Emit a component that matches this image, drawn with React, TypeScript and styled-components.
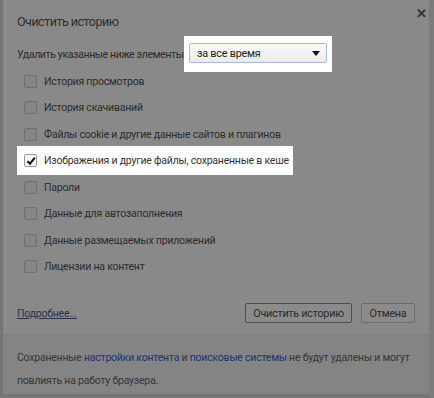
import React from 'react';
import styled, { createGlobalStyle } from 'styled-components';

const GlobalStyle = createGlobalStyle`
  html, body {
    margin: 0;
    padding: 0;
    background: #7a7a7a;
  }
  body {
    font-family: Roboto, 'Open Sans', sans-serif;
  }
`;

const Frame = styled.div`
  width: 434px;
  height: 398px;
  box-sizing: border-box;
  border-left: 3px solid #747474;
  border-right: 5px solid #7c7c7c;
  border-bottom: 4px solid #767676;
  background: #898989;
  display: flex;
  flex-direction: column;
  color: #2c2c2c;
  font-size: 10.5px;
  letter-spacing: -0.22px;
  overflow: hidden;
`;

const Main = styled.div`
  flex: 1;
  padding: 12px 14px 0 14px;
  display: flex;
  flex-direction: column;
  position: relative;
`;

const Title = styled.div`
  font-size: 12.5px;
  line-height: 20px;
  color: #2f2f2f;
  letter-spacing: -0.5px;
`;

const Close = styled.div`
  position: absolute;
  top: 7px;
  right: 2px;
  font-size: 13px;
  font-weight: 700;
  color: #333;
  line-height: 1;
`;

const RangeRow = styled.div`
  display: flex;
  align-items: center;
  margin-top: 4px;
  height: 36px;
`;

const RangeLabel = styled.span`
  width: 167px;
  white-space: nowrap;
  letter-spacing: -0.36px;
`;

const Highlight = styled.div`
  background: #ffffff;
  display: flex;
  align-items: flex-start;
  height: 36px;
  padding: 0 5px;
  box-sizing: border-box;
`;

const SelectBox = styled.div`
  width: 138px;
  height: 20px;
  margin-top: 7px;
  border: 1px solid #a9bcd6;
  border-radius: 2px;
  background: linear-gradient(#fafafa, #ebebeb);
  display: flex;
  align-items: center;
  justify-content: space-between;
  padding: 0 6px 0 7px;
  box-sizing: border-box;
  color: #222;
  font-size: 10.8px;
`;

const Arrow = styled.span`
  width: 0;
  height: 0;
  border-left: 4px solid transparent;
  border-right: 4px solid transparent;
  border-top: 5px solid #111;
`;

const List = styled.div`
  display: flex;
  flex-direction: column;
  margin-top: -4px;
`;

const Item = styled.div<{ $lit?: boolean }>`
  height: 26.5px;
  display: flex;
  align-items: center;
  padding-left: ${p => (p.$lit ? 0 : 7)}px;
`;

const Box = styled.span<{ $lit?: boolean }>`
  width: 11px;
  height: 11px;
  border: 1px solid ${p => (p.$lit ? '#9a9a9a' : '#6f6f6f')};
  border-radius: 2px;
  background: ${p => (p.$lit ? '#f4f4f4' : '#858585')};
  margin-right: 7px;
  display: inline-flex;
  align-items: center;
  justify-content: center;
  flex-shrink: 0;
`;

const Label = styled.span<{ $lit?: boolean }>`
  color: ${p => (p.$lit ? '#333' : '#2c2c2c')};
  white-space: nowrap;
`;

const LitRow = styled.div`
  background: #fff;
  width: 276px;
  box-sizing: border-box;
  height: 29px;
  display: flex;
  align-items: center;
  padding: 0 6px 0 7px;
`;

const Actions = styled.div`
  margin-top: auto;
  display: flex;
  align-items: center;
  padding-bottom: 11px;
`;

const Link = styled.a`
  color: #28324f;
  text-decoration: underline;
  margin-right: auto;
`;

const Button = styled.button<{ $focus?: boolean }>`
  height: 20px;
  padding: 0;
  font-family: inherit;
  font-size: 10.8px;
  letter-spacing: -0.25px;
  white-space: nowrap;
  color: #2a2a2a;
  background: #8b8b8b;
  border: 1px solid ${p => (p.$focus ? '#4e4e4e' : '#6c6c6c')};
  border-radius: 2px;
  margin-left: 9px;
  box-sizing: border-box;
  width: ${p => (p.$focus ? 107 : 54)}px;
`;

const Footer = styled.div`
  background: #848484;
  border-top: 1px solid #7d7d7d;
  padding: 0 14px;
  padding-top: 11px;
  height: 60px;
  box-sizing: border-box;
  line-height: 23px;
  color: #363636;
  white-space: nowrap;
`;

const Blue = styled.span`
  color: #213270;
`;

const Check = () => (
  <svg width="10" height="10" viewBox="0 0 10 10">
    <path d="M1.5 5.2 L4 7.8 L8.8 1.6" fill="none" stroke="#111" strokeWidth="2" />
  </svg>
);

const items = [
  'История просмотров',
  'История скачиваний',
  'Файлы cookie и другие данные сайтов и плагинов',
  'Изображения и другие файлы, сохраненные в кеше',
  'Пароли',
  'Данные для автозаполнения',
  'Данные размещаемых приложений',
  'Лицензии на контент',
];

export default function App() {
  return (
    <>
      <GlobalStyle />
      <Frame>
        <Main>
          <Title>Очистить историю</Title>
          <Close>✕</Close>
          <RangeRow>
            <RangeLabel>Удалить указанные ниже элементы:</RangeLabel>
            <Highlight>
              <SelectBox>
                <span>за все время</span>
                <Arrow />
              </SelectBox>
            </Highlight>
          </RangeRow>
          <List>
            {items.map((t, i) =>
              i === 3 ? (
                <Item key={t} $lit>
                  <LitRow>
                    <Box $lit>
                      <Check />
                    </Box>
                    <Label $lit>{t}</Label>
                  </LitRow>
                </Item>
              ) : (
                <Item key={t}>
                  <Box />
                  <Label>{t}</Label>
                </Item>
              )
            )}
          </List>
          <Actions>
            <Link>Подробнее...</Link>
            <Button $focus>Очистить историю</Button>
            <Button>Отмена</Button>
          </Actions>
        </Main>
        <Footer>
          Сохраненные <Blue>настройки контента</Blue> и <Blue>поисковые системы</Blue> не будут удалены и могут
          <br />
          повлиять на работу браузера.
        </Footer>
      </Frame>
    </>
  );
}
